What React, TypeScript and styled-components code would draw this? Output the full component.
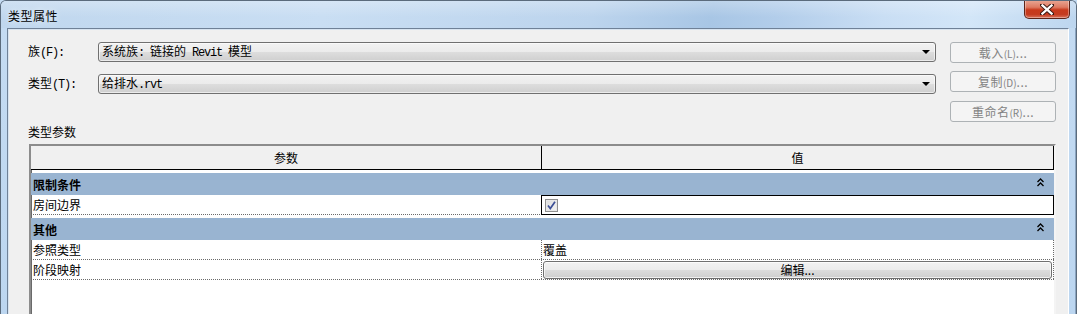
import * as React from 'react';
import styled, { createGlobalStyle } from 'styled-components';

// 类型属性 dialog (Revit type properties, Win7 look)

const GlobalStyle = createGlobalStyle`
  html, body { margin: 0; padding: 0; overflow: hidden; background: #c4dbf2; }
  body { font-family: "Noto Sans CJK SC", "Noto Sans", sans-serif; font-size: 12px; color: #000; }
  * { box-sizing: border-box; }
`;

const App: React.FC = () => {
  return (
    <>
      <GlobalStyle />
      <Window>
        <TitleBar>
          <Title>类型属性</Title>
          <CloseButton aria-label="close">
            <svg width="14" height="11" viewBox="0 0 14 11">
              <path d="M2 1 L12 10 M12 1 L2 10" stroke="#3b1a14" strokeWidth="4.2" strokeLinecap="square" />
              <path d="M2.4 1.4 L11.6 9.6 M11.6 1.4 L2.4 9.6" stroke="#fff" strokeWidth="2.2" strokeLinecap="square" />
            </svg>
          </CloseButton>
        </TitleBar>

        <FrameBody>
          <SideFrame />
          <Client>
            <TopArea>
              <FieldColumn>
                <FieldRow>
                  <FieldLabel>族<Latin>(F):</Latin></FieldLabel>
                  <Combo>
                    <ComboText>系统族<Latin>: </Latin>链接的<Latin> Revit </Latin>模型</ComboText>
                    <ComboArrow />
                  </Combo>
                </FieldRow>
                <FieldRow>
                  <FieldLabel>类型<Latin>(T):</Latin></FieldLabel>
                  <Combo>
                    <ComboText>给排水<Latin>.rvt</Latin></ComboText>
                    <ComboArrow />
                  </Combo>
                </FieldRow>
              </FieldColumn>
              <ButtonColumn>
                <SideButton disabled>载入<Key>(L)</Key>...</SideButton>
                <SideButton disabled>复制<Key>(D)</Key>...</SideButton>
                <SideButton disabled $gapTop={1}>重命名<Key>(R)</Key>...</SideButton>
              </ButtonColumn>
            </TopArea>

            <SectionLabel>类型参数</SectionLabel>

            <Grid>
              <HeaderRow>
                <HeaderCell>参数</HeaderCell>
                <HeaderCell>值</HeaderCell>
              </HeaderRow>

              <GroupBand>
                <span>限制条件</span>
                <Chevrons />
              </GroupBand>
              <DataRow>
                <NameCell>房间边界</NameCell>
                <ValueCell $focused>
                  <CheckBox>
                    <svg width="11" height="11" viewBox="0 0 11 11">
                      <path d="M2 5.5 L4.3 8.5 L9 1.8" stroke="#3c4f96" strokeWidth="1.7" fill="none" />
                    </svg>
                  </CheckBox>
                </ValueCell>
              </DataRow>

              <GroupBand>
                <span>其他</span>
                <Chevrons />
              </GroupBand>
              <DataRow>
                <NameCell>参照类型</NameCell>
                <ValueCell>覆盖</ValueCell>
              </DataRow>
              <DataRow>
                <NameCell>阶段映射</NameCell>
                <ValueCell $tight>
                  <EditButton>编辑...</EditButton>
                </ValueCell>
              </DataRow>
            </Grid>
          </Client>
          <SideFrame $right />
        </FrameBody>
      </Window>
    </>
  );
};

const Chevrons: React.FC = () => (
  <ChevronWrap>
    <svg width="7" height="9" viewBox="0 0 7 9">
      <path d="M0.5 4 L3.5 1 L6.5 4 M0.5 8 L3.5 5 L6.5 8" stroke="#000" strokeWidth="1.3" fill="none" />
    </svg>
  </ChevronWrap>
);

export default App;

/* ===== Styling ===== */

const Window = styled.div`
  width: 1077px;
  height: 314px;
  display: flex;
  flex-direction: column;
  border-top-left-radius: 6px;
  border-top-right-radius: 6px;
  border: 1px solid #5b6b7c;
  border-bottom: none;
  overflow: hidden;
  background: #c4dbf2;
`;

const TitleBar = styled.div`
  height: 27px;
  flex: 0 0 auto;
  display: flex;
  align-items: flex-start;
  justify-content: space-between;
  padding-left: 7px;
  padding-right: 6px;
  background:
    linear-gradient(180deg, rgba(255,255,255,.25) 0%, rgba(255,255,255,0) 60%),
    linear-gradient(100deg, #c0d7ee 0%, #c9def3 30%, #bcd4ed 55%, #a8c6e5 66%, #b2cdea 72%, #c9def4 82%, #d3e6f8 90%, #bdd6ef 100%);
`;

const Title = styled.div`
  margin-top: 6px;
  font-size: 12px;
  letter-spacing: 0.5px;
  color: #000;
  text-shadow: 0 0 6px rgba(255,255,255,.9);
`;

const CloseButton = styled.div`
  width: 46px;
  height: 19px;
  margin-top: -1px;
  display: flex;
  align-items: center;
  justify-content: center;
  border: 1px solid #5c2419;
  border-top: none;
  border-bottom-left-radius: 5px;
  border-bottom-right-radius: 5px;
  background: linear-gradient(180deg, #e9a996 0%, #de7a62 40%, #c8391c 55%, #c43b20 80%, #d9735b 100%);
  box-shadow: inset 0 0 0 1px rgba(255,255,255,.35);
`;

const FrameBody = styled.div`
  flex: 1 1 auto;
  display: flex;
  min-height: 0;
`;

const SideFrame = styled.div<{ $right?: boolean }>`
  width: ${({ $right }) => ($right ? '7px' : '6px')};
  flex: 0 0 auto;
  background: linear-gradient(180deg, #c4dbf2 0%, #bcd6f0 100%);
  ${({ $right }) => ($right ? 'border-right: 1px solid #8aa4c0;' : '')}
`;

const Client = styled.div`
  flex: 1 1 auto;
  background: #f0f0f0;
  border-top: 1px solid #6f8197;
  border-left: 1px solid #6f8197;
  border-right: 1px solid #ffffff;
  box-shadow: inset 1px 1px 0 #d8e4f0;
  padding: 0 12px 0 20px;
  display: flex;
  flex-direction: column;
`;

const TopArea = styled.div`
  display: flex;
  gap: 14px;
`;

const FieldColumn = styled.div`
  flex: 1 1 auto;
  display: flex;
  flex-direction: column;
  gap: 10px;
  padding-top: 12px;
`;

const FieldRow = styled.div`
  display: grid;
  grid-template-columns: 70px 1fr;
  align-items: center;
`;

const FieldLabel = styled.div`
  font-size: 12px;
  line-height: 20px;
  color: #000;
  white-space: pre;
`;

const Combo = styled.div`
  height: 20px;
  border: 1px solid #707070;
  border-radius: 3px;
  display: flex;
  align-items: center;
  justify-content: space-between;
  padding: 0 4px 0 3px;
  background: linear-gradient(180deg, #f2f2f2 0%, #ebebeb 50%, #dddddd 51%, #cfcfcf 100%);
  box-shadow: inset 0 0 0 1px rgba(255,255,255,.6);
`;

const ComboText = styled.span`
  font-size: 12px;
  line-height: 18px;
  white-space: pre;
`;

const Latin = styled.span`
  font-family: "Liberation Mono", "Noto Sans CJK SC", monospace;
  font-size: 12px;
  letter-spacing: -1.2px;
  white-space: pre;
`;

const ComboArrow = styled.span`
  width: 0;
  height: 0;
  margin-right: 1px;
  border-left: 4px solid transparent;
  border-right: 4px solid transparent;
  border-top: 4px solid #000;
`;

const ButtonColumn = styled.div`
  width: 106px;
  flex: 0 0 auto;
  display: flex;
  flex-direction: column;
  gap: 8px;
  padding-top: 13px;
`;

const SideButton = styled.button<{ $gapTop?: number }>`
  height: 21px;
  margin-top: ${({ $gapTop }) => $gapTop ?? 0}px;
  padding: 0;
  border: 1px solid #adb2b5;
  border-radius: 3px;
  background: #f4f4f4;
  color: #838383;
  font-family: inherit;
  font-size: 12px;
  line-height: 19px;
  letter-spacing: 0.5px;
  text-align: center;
  &:disabled { cursor: default; color: #838383; }
`;

const Key = styled.span`
  font-size: 10px;
  letter-spacing: 0;
`;

const SectionLabel = styled.div`
  margin-top: 3px;
  font-size: 12px;
  line-height: 14px;
  color: #000;
`;

const Grid = styled.div`
  flex: 1 1 auto;
  margin-top: 5px;
  margin-left: 1px;
  background: #ffffff;
  border-top: 2px solid #8c8c8c;
  border-left: 2px solid #8c8c8c;
  border-right: 2px solid #f4f4f4;
  box-shadow: inset 1px 1px 0 #6a6a6a;
  display: flex;
  flex-direction: column;
`;

const HeaderRow = styled.div`
  display: grid;
  grid-template-columns: 511px 1fr;
  height: 24px;
  background: #f0f0f0;
  border-bottom: 1px solid #000;
  border-right: 1px solid #000;
  margin-bottom: 3px;
`;

const HeaderCell = styled.div`
  display: flex;
  align-items: center;
  justify-content: center;
  font-size: 12px;
  &:first-child { border-right: 1px solid #000; }
`;

const GroupBand = styled.div`
  height: 22px;
  display: flex;
  align-items: center;
  justify-content: space-between;
  padding: 0 0 0 2px;
  background: #99b4d1;
  font-size: 12px;
  font-weight: 700;
`;

const ChevronWrap = styled.span`
  width: 16px;
  display: flex;
  align-items: center;
  justify-content: flex-start;
  margin-right: 1px;
  margin-top: -3px;
`;

const DataRow = styled.div`
  display: grid;
  grid-template-columns: 511px 1fr;
  height: 20px;
  border-bottom: 1px dotted #6a6a6a;
  & + ${GroupBand} { margin-top: 3px; }
`;

const NameCell = styled.div`
  display: flex;
  align-items: center;
  padding-left: 2px;
  border-right: 1px dotted #6a6a6a;
  font-size: 12px;
`;

const ValueCell = styled.div<{ $focused?: boolean; $tight?: boolean }>`
  display: flex;
  align-items: center;
  padding-left: 1px;
  padding-right: ${({ $tight }) => ($tight ? '1px' : '0')};
  border-right: 1px dotted #6a6a6a;
  font-size: 12px;
  ${({ $focused }) => ($focused ? 'border: 1px solid #000; margin-left: -1px; margin-bottom: -1px; padding-left: 3px;' : '')}
`;

const CheckBox = styled.span`
  width: 13px;
  height: 13px;
  display: flex;
  align-items: center;
  justify-content: center;
  border: 1px solid #8f8f8f;
  background: linear-gradient(135deg, #dcdcdc 0%, #f4f4f4 100%);
  box-shadow: inset 0 0 0 1px #e8e8e8;
`;

const EditButton = styled.button`
  flex: 1 1 auto;
  height: 18px;
  padding: 0;
  border: 1px solid #707070;
  border-radius: 3px;
  background: linear-gradient(180deg, #f2f2f2 0%, #ebebeb 50%, #dddddd 51%, #cfcfcf 100%);
  box-shadow: inset 0 0 0 1px rgba(255,255,255,.7);
  font-family: inherit;
  font-size: 12px;
  line-height: 16px;
  color: #000;
  text-align: center;
`;
